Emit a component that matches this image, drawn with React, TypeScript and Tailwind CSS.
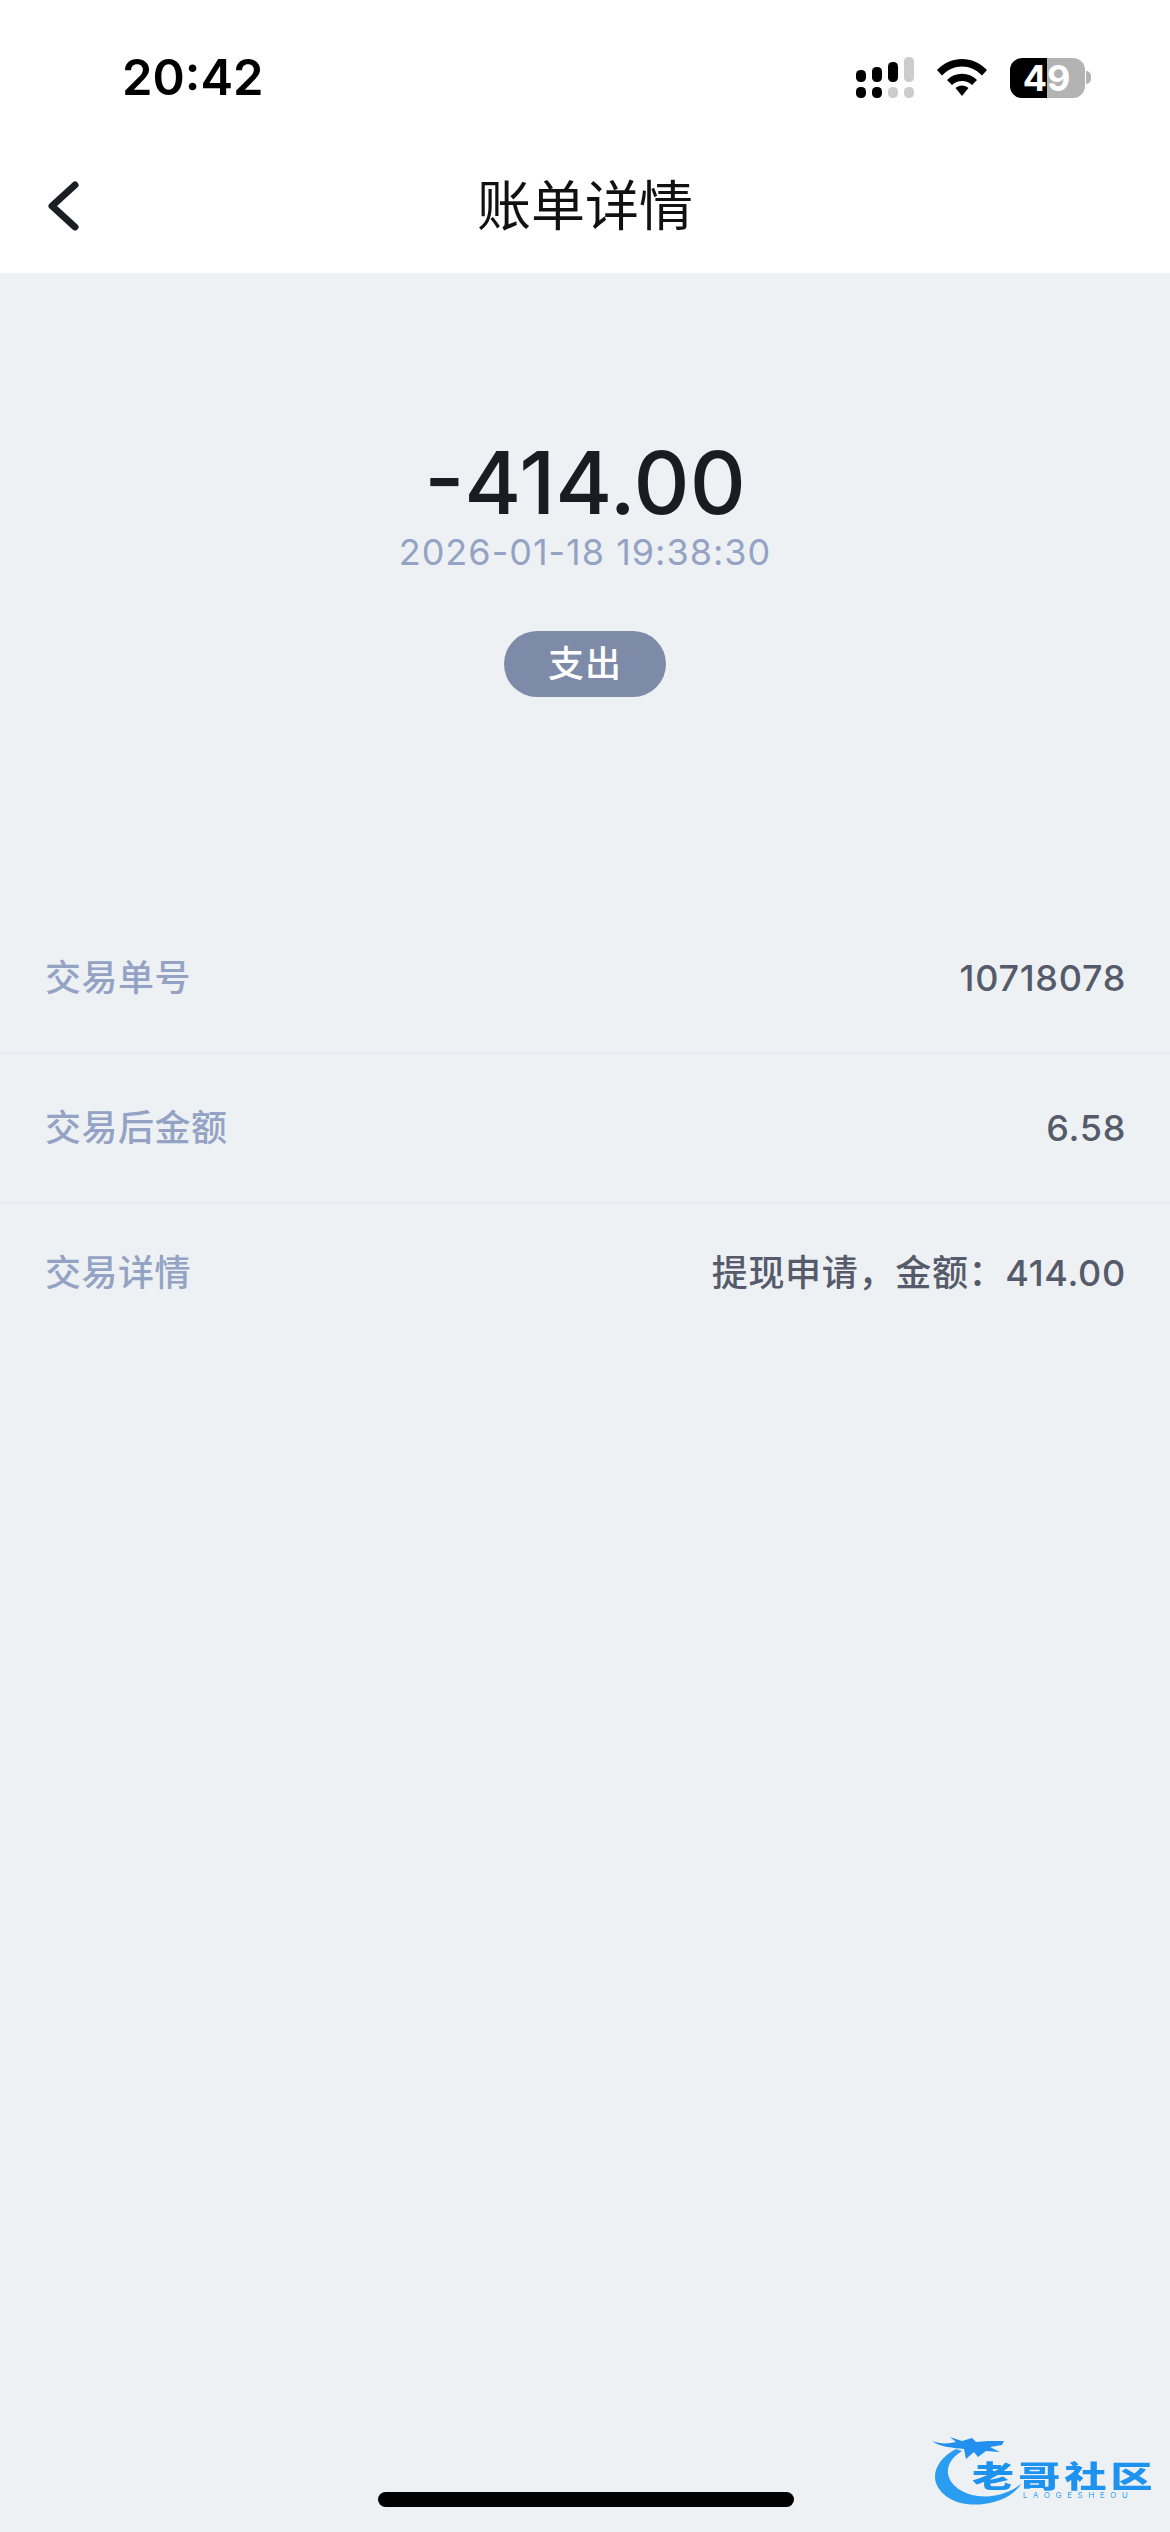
import React from 'react';

const cjk = "font-['Inter','Noto_Sans_CJK_SC',sans-serif]";

const rows = [
  { label: '交易单号', value: '10718078', height: 'h-[150px]', line: true },
  { label: '交易后金额', value: '6.58', height: 'h-[150px]', line: true },
  { label: '交易详情', value: '提现申请，金额：414.00', height: 'h-[138px]', line: false },
];

const Signal = () => (
  <svg width="58" height="41" viewBox="0 0 58 41">
    <rect x="0" y="13" width="10" height="12" rx="4.5" fill="#000" />
    <rect x="16" y="10" width="10" height="15" rx="4.5" fill="#000" />
    <rect x="32" y="5" width="10" height="20" rx="4.5" fill="#000" />
    <rect x="48" y="0" width="10" height="25" rx="4.5" fill="#ccc" />
    <rect x="0" y="30" width="10" height="11" rx="4.5" fill="#000" />
    <rect x="16" y="30" width="10" height="11" rx="4.5" fill="#000" />
    <rect x="32" y="30" width="10" height="11" rx="4.5" fill="#ccc" />
    <rect x="48" y="30" width="10" height="11" rx="4.5" fill="#ccc" />
  </svg>
);

const Wifi = () => (
  <svg width="50" height="37" viewBox="0 0 50 37">
    <path d="M0 11 C14 -3.600 36 -3.600 50 11 L45 16.500 C33.500 4.500 16.500 4.500 5 16.500 Z" fill="#000" />
    <path d="M10 21 C18 12.500 32 12.500 40 21 L35 26 C29.500 20.500 20.500 20.500 15 26 Z" fill="#000" />
    <path d="M18.500 29 C22 25.500 28 25.500 31.500 29 L25 37 Z" fill="#000" />
  </svg>
);

const Battery = () => (
  <div className="flex items-center">
    <div className="relative flex h-[40px] w-[75px] items-center justify-center rounded-[12px] bg-[linear-gradient(to_right,#000_37px,#b3b3b3_37px)] pr-[2px] font-['Inter',sans-serif] text-[36px] font-bold leading-[38px] text-white">
      49
    </div>
    <div className="ml-[1px] h-[13px] w-[5px] rounded-r-full bg-[#b3b3b3]" />
  </div>
);

const Watermark = () => (
  <div className="absolute left-[932px] top-[2433px] h-[72px] w-[222px]">
    <svg className="absolute left-0 top-0 blur-[0.7px]" width="110" height="72" viewBox="0 0 110 72">
      <path d="M24 16 C8 24 0 38 4 50 C10 66 30 74 52 71 C68 69 82 62 89 51 C78 60 62 65 46 63 C30 61 18 52 16 41 C15 32 20 24 30 18 Z" fill="#2a9cf2" />
      <path d="M0 8 C8 11 16 11 24 9 L18 4 L30 8 L40 5 L44 9 L56 8 L72 8 L70 12 L58 14 L68 19 L54 18 L46 24 L42 19 L34 26 L32 16 C22 15 8 14 0 8 Z" fill="#2190ee" />
    </svg>
    <div className="absolute left-[40px] top-[26px] origin-left scale-x-[1.4] whitespace-nowrap font-['Noto_Sans_CJK_SC',sans-serif] text-[30px] font-black leading-[30px] tracking-[3px] text-[#1e92ef] blur-[0.4px]">
      老哥社区
    </div>
    <div className="absolute left-[91px] top-[57px] font-['Inter',sans-serif] text-[8px] leading-[10px] tracking-[5.6px] text-[#3aa0ef] blur-[0.3px]">
      LAOGESHEOU
    </div>
  </div>
);

export default function App() {
  return (
    <div className={`relative flex h-[2532px] w-[1170px] flex-col overflow-hidden bg-[#eef1f4] ${cjk}`}>
      <div className="bg-white">
        <div className="flex h-[140px] items-start justify-between pl-[122px] pr-[79px] pt-[57px]">
          <span className="font-['Inter',sans-serif] text-[49px] font-semibold leading-[42px] text-black">20:42</span>
          <div className="flex items-center gap-[23px]">
            <Signal />
            <Wifi />
            <Battery />
          </div>
        </div>
        <div className="relative flex h-[133px] items-center justify-center">
          <svg className="absolute left-[46px] top-[40px]" width="34" height="52" viewBox="0 0 34 52">
            <path d="M29 5 L6 26 L29 47" fill="none" stroke="#1b1f24" strokeWidth="7" strokeLinecap="round" strokeLinejoin="round" />
          </svg>
          <h1 className="text-[54px] font-normal leading-[64px] text-[#111]">账单详情</h1>
        </div>
      </div>

      <div className="flex flex-col items-center pt-[160px]">
        <div className="text-[87px] font-medium leading-[100px] text-[#191d21]">-414.00</div>
        <div className="text-[36px] leading-[38px] tracking-[1px] text-[#94a3c4]">2026-01-18 19:38:30</div>
        <div className="mt-[60px] flex h-[66px] w-[162px] items-center justify-center rounded-full bg-[#7d8aa8] text-[36px] font-medium tracking-[1px] text-white">
          支出
        </div>
      </div>

      <div className="mt-[207px] flex flex-col">
        {rows.map((row) => (
          <div
            key={row.label}
            className={`flex items-center justify-between pl-[45px] pr-[44px] text-[36px] font-medium ${row.height} ${row.line ? 'border-b-2 border-[#e9ecf0]' : ''}`}
          >
            <span className="tracking-[0.5px] text-[#94a3c4]">{row.label}</span>
            <span className="tracking-[0.7px] text-[#555b6a]">{row.value}</span>
          </div>
        ))}
      </div>

      <Watermark />
      <div className="absolute bottom-[25px] left-[378px] h-[15px] w-[416px] rounded-full bg-black" />
    </div>
  );
}
